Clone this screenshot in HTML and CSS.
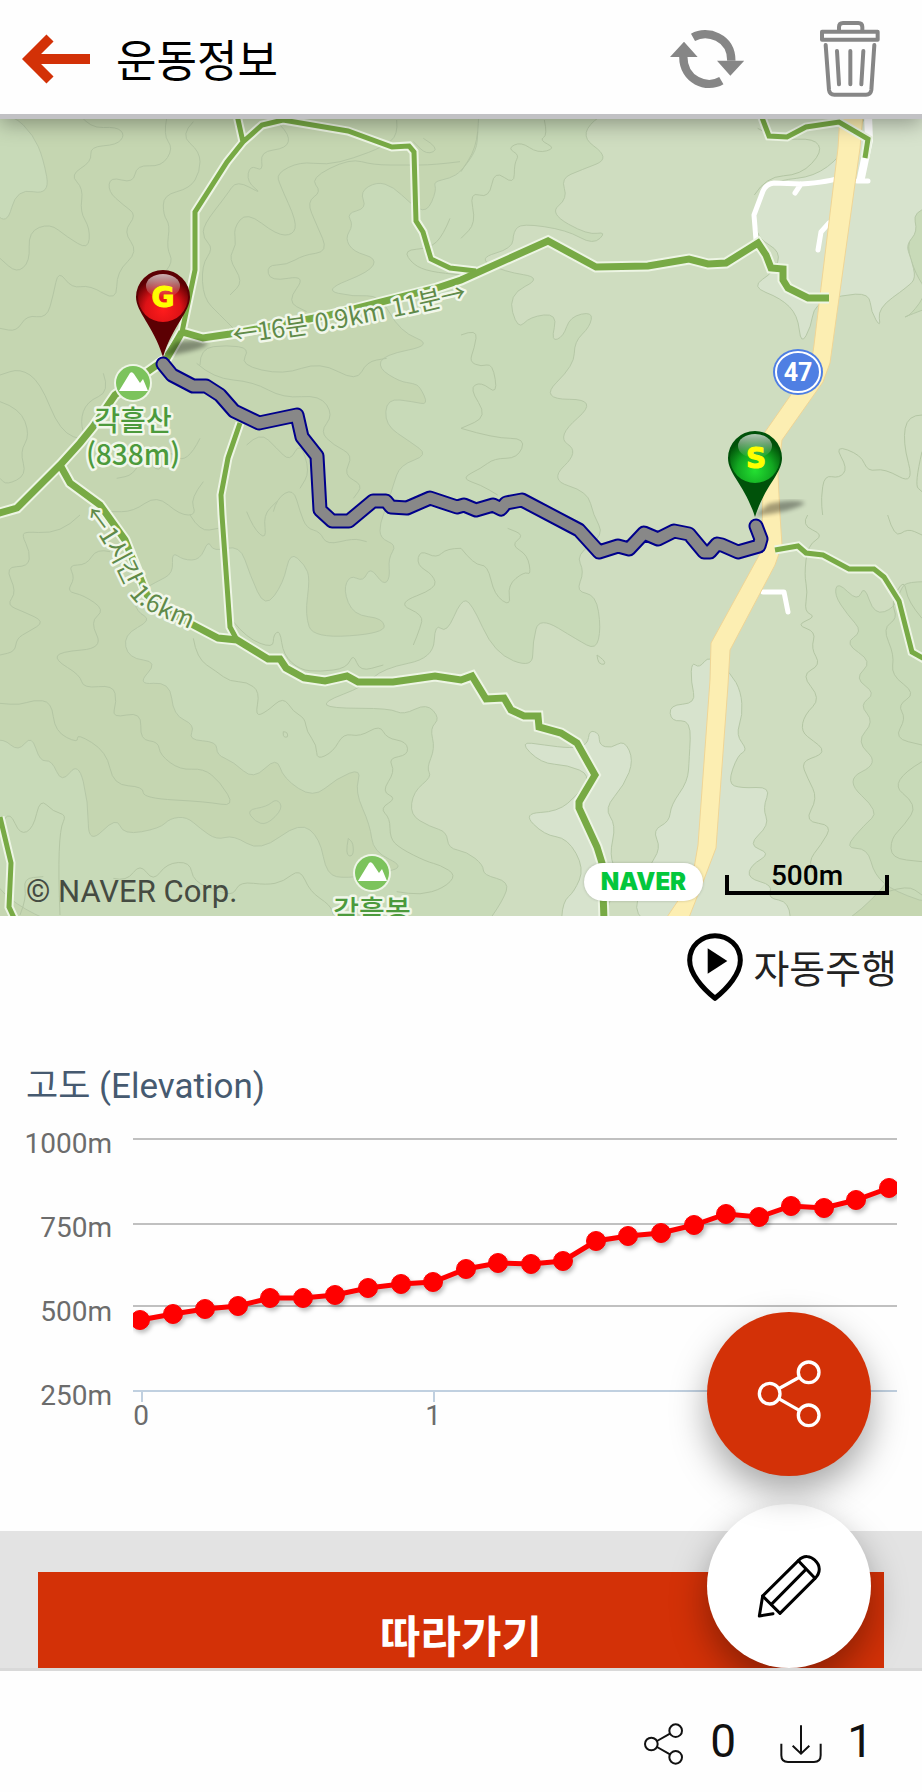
FILE: index.html
```html
<!DOCTYPE html>
<html lang="ko">
<head>
  <meta charset="UTF-8" />
  <meta name="viewport" content="width=device-width, initial-scale=1" />
  <title>운동정보</title>
  <link rel="stylesheet" href="styles.css">
</head>
<body>

  <header class="header">
    <button class="icon-btn" aria-label="뒤로">
      <svg width="70" height="50" viewBox="0 0 70 50"><path d="M68 25H8M28 4L7 25L28 46" fill="none" stroke="#d33107" stroke-width="10"/></svg>
    </button>
    <h1 class="title">운동정보</h1>
    <button class="icon-btn" aria-label="새로고침">
      <svg width="74" height="60" viewBox="0 0 222 180">
        <g fill="none" stroke="#868686" stroke-width="25">
          <path d="M69 25C112 1 184 24 184 95"/>
          <path d="M154 155C110 181 40 153 40 84"/>
        </g>
        <path d="M141 95h82l-42 45zM0 84h83L42 38z" fill="#868686"/>
      </svg>
    </button>
    <button class="icon-btn" aria-label="삭제">
      <svg width="60" height="76" viewBox="0 0 180 228" fill="none" stroke="#868686" stroke-width="12" stroke-linecap="round" stroke-linejoin="round">
        <path d="M57 28V18Q57 6 69 6H115Q127 6 127 18V28"/>
        <path d="M6 32H173V56H6z"/>
        <path d="M17 72L27 207Q29 221 43 221H138Q152 221 154 207L163 72"/>
        <path d="M51 90L57 190M91 90V190M130 90L124 190"/>
      </svg>
    </button>
  </header>

  <main class="content">
    <section class="map">
      <svg class="map-svg" viewBox="0 119 922 797">
        <defs>
          <radialGradient id="pinRed" cx="50%" cy="75%" r="65%">
            <stop offset="0" stop-color="#ff1c1c"/>
            <stop offset="0.55" stop-color="#dd1216"/>
            <stop offset="1" stop-color="#5c0003"/>
          </radialGradient>
          <radialGradient id="pinGreen" cx="50%" cy="75%" r="65%">
            <stop offset="0" stop-color="#24e032"/>
            <stop offset="0.55" stop-color="#12a821"/>
            <stop offset="1" stop-color="#004f08"/>
          </radialGradient>
          <linearGradient id="gloss" x1="0" y1="0" x2="0" y2="1">
            <stop offset="0" stop-color="#fff" stop-opacity="0.7"/>
            <stop offset="1" stop-color="#fff" stop-opacity="0"/>
          </linearGradient>
          <filter id="soft"><feGaussianBlur stdDeviation="2"/></filter>
          <path id="pathRidge" d="M234 344L330 330L410 314L470 300"/>
          <path id="pathValley" d="M83 514C104 540 115 563 129 593C138 610 158 614 198 633"/>
        </defs>

        <rect y="119" width="922" height="797" fill="#c5d6b1"/>
        <g id="terrain"></g>
        <g id="contours" class="contour"></g>

        <!-- roads -->
        <g class="lane">
          <path d="M842 177Q830 182 801 184L774 183Q766 184 763 191L754 215L756 240M801 184L795 193"/>
          <path d="M857 181H868M829 223L821 232L818 250M763 592H784L788 612"/>
          <path d="M868 115L869 140L861 178" stroke-width="8"/>
        </g>
        <path class="road-edge" d="M840 115H863L860 148L830 363L823 382L782 440L778 475L780 515L782 545L775 565L730 650L728 685L716 848L703 882L688 920H665L692 880L698 845L710 680L711 643L762 550L763 480L765 432L811 366L814 345L838 148z"/>

        <!-- hiking trails -->
        <g class="trail-case">
          <path d="M237 115L243 142M167 355L182 332L195 270V212L227 162L243 142L262 125L283 120L348 131L392 147L409 146L414 152L416 221L423 232L431 259L450 268L476 271"/>
          <path d="M240 423L228 458L221 495L222 515L230 627L237 640"/>
          <path d="M0 817L11 863L9 907L15 920M761 115L769 136L787 137L806 127L839 122L868 139L865 158"/>
          <path d="M775 550L798 546L806 553L823 555L849 569H874L884 577L899 601L912 652L926 660"/>
        </g>
        <g class="trail-case wide">
          <path d="M182 332L203 338L230 334L330 315L437 288L461 280L548 241L596 267L648 266L689 259L708 264L726 263L758 243L766 255L771 268L783 269V280L788 288L808 298L829 298"/>
          <path d="M182 332L167 358L150 370L115 395L93 427L80 443L60 465L17 508L-4 514"/>
          <path d="M60 465L70 483L100 505L125 540L147 595L165 610L197 627L218 638L237 640L268 659H280L286 668L304 678L325 681L347 676L358 682H393L435 676L461 680L472 676L486 699L504 698L511 710L524 716H538L539 727L561 733L577 743L595 775L579 802V808L597 847L602 863L604 920"/>
        </g>
        <g class="trail">
          <path d="M237 115L243 142M167 355L182 332L195 270V212L227 162L243 142L262 125L283 120L348 131L392 147L409 146L414 152L416 221L423 232L431 259L450 268L476 271"/>
          <path d="M240 423L228 458L221 495L222 515L230 627L237 640"/>
          <path d="M0 817L11 863L9 907L15 920M761 115L769 136L787 137L806 127L839 122L868 139L865 158"/>
          <path d="M775 550L798 546L806 553L823 555L849 569H874L884 577L899 601L912 652L926 660"/>
        </g>
        <g class="trail wide">
          <path d="M182 332L203 338L230 334L330 315L437 288L461 280L548 241L596 267L648 266L689 259L708 264L726 263L758 243L766 255L771 268L783 269V280L788 288L808 298L829 298"/>
          <path d="M182 332L167 358L150 370L115 395L93 427L80 443L60 465L17 508L-4 514"/>
          <path d="M60 465L70 483L100 505L125 540L147 595L165 610L197 627L218 638L237 640L268 659H280L286 668L304 678L325 681L347 676L358 682H393L435 676L461 680L472 676L486 699L504 698L511 710L524 716H538L539 727L561 733L577 743L595 775L579 802V808L597 847L602 863L604 920"/>
        </g>

        <!-- trail and peak names -->
        <text class="trail-label"><textPath href="#pathRidge">←16분 0.9km 11분→</textPath></text>
        <text class="trail-label"><textPath href="#pathValley">←1시간 1.6km</textPath></text>

        <g id="peak">
          <circle cx="133" cy="383" r="19" fill="#eef5e6"/>
          <circle cx="133" cy="383" r="17" fill="#7cc35c"/>
          <path d="M119 391L130 373Q132 371 134 374L140 383L143 379L148 391z" fill="#fff"/>
        </g>
        <use href="#peak" x="239" y="490"/>
        <text class="peak-label" x="133" y="431">각흘산</text>
        <text class="peak-label" x="133" y="465">(838m)</text>
        <text class="peak-label" x="372" y="921">각흘봉</text>

        <!-- recorded route -->
        <path class="route-edge" d="M163 364L172 375L193 386H206L220 395L234 411L259 423L297 415L302 437L317 456L320 510L332 521H349L373 501H386L391 507L407 508L430 498L457 507L464 505L476 510L493 505L501 509L506 503L522 500L579 530L599 552L618 546L629 549L644 533L658 539L674 531L689 534L704 552H710L717 544L722 545L738 552L759 546L761 539L756 526"/>
        <path class="route" d="M163 364L172 375L193 386H206L220 395L234 411L259 423L297 415L302 437L317 456L320 510L332 521H349L373 501H386L391 507L407 508L430 498L457 507L464 505L476 510L493 505L501 509L506 503L522 500L579 530L599 552L618 546L629 549L644 533L658 539L674 531L689 534L704 552H710L717 544L722 545L738 552L759 546L761 539L756 526"/>

        <!-- route 47 shield -->
        <ellipse cx="798" cy="372" rx="25" ry="23" fill="#4f7fe3"/>
        <ellipse cx="798" cy="372" rx="22" ry="20" fill="none" stroke="#fff" stroke-width="2"/>
        <text class="shield" x="798" y="381">47</text>

        <!-- goal and start pins -->
        <path d="M163 356L176 342Q200 338 208 344Q200 351 163 356z" fill="#000" opacity="0.35" filter="url(#soft)"/>
        <path d="M136 297a27 27 0 0 1 54 0C190 312 173 325 163 357C153 325 136 312 136 297z" fill="#5c0003"/>
        <circle cx="163" cy="297" r="25" fill="url(#pinRed)"/>
        <ellipse cx="163" cy="286" rx="17" ry="12" fill="url(#gloss)"/>
        <text class="pin-text" x="163" y="307">G</text>

        <path d="M755 516L768 504Q795 498 805 503Q795 511 755 516z" fill="#000" opacity="0.35" filter="url(#soft)"/>
        <path d="M728 458a27 27 0 0 1 54 0C782 474 765 485 755 517C745 485 728 474 728 458z" fill="#00520a"/>
        <circle cx="755" cy="458" r="25" fill="url(#pinGreen)"/>
        <ellipse cx="755" cy="446" rx="17" ry="12" fill="url(#gloss)"/>
        <text class="pin-text" x="756" y="468">S</text>
      </svg>

      <div class="map-bar">
        <span class="copyright">© NAVER Corp.</span>
        <a class="naver" href="#">NAVER</a>
        <span class="scale">500m</span>
      </div>
    </section>

    <div class="drive-row">
      <button class="drive-btn">
        <svg width="56" height="68" viewBox="0 0 168 204">
          <path d="M84 8C124 8 160 38 160 82C160 122 122 166 84 196C46 166 8 122 8 82C8 38 44 8 84 8z" fill="none" stroke="#000" stroke-width="15" stroke-linejoin="round"/>
          <path d="M62 46L121 84L62 122z"/>
        </svg>
        <span>자동주행</span>
      </button>
    </div>

    <section class="elevation">
      <h2>고도 (Elevation)</h2>
      <svg class="chart" viewBox="0 0 922 424">
        <defs>
          <clipPath id="plot"><rect x="133" y="0" width="764" height="300"/></clipPath>
        </defs>
        <path class="grid" d="M133 32H897M133 117H897M133 199H897"/>
        <path class="axis" d="M133 284H897M142 284V295M434 284V295M726 284V295"/>
        <g class="y-labels">
          <text x="112" y="46">1000m</text>
          <text x="112" y="130">750m</text>
          <text x="112" y="214">500m</text>
          <text x="112" y="298">250m</text>
        </g>
        <g class="x-labels">
          <text x="141" y="318">0</text>
          <text x="433" y="318">1</text>
        </g>
        <g clip-path="url(#plot)"><g id="series" class="series"></g></g>
      </svg>
    </section>

    <div class="action">
      <button class="follow-btn">따라가기</button>
    </div>
  </main>

  <div class="fabs">
    <button class="fab fab-share" aria-label="공유">
      <svg width="70" height="70" viewBox="879 387 210 210" fill="none" stroke="#fff" stroke-width="10">
        <circle cx="926" cy="491" r="31"/>
        <circle cx="1043" cy="427" r="31"/>
        <circle cx="1043" cy="556" r="31"/>
        <path d="M953 476L1015 442M953 506L1015 541"/>
      </svg>
    </button>
    <button class="fab fab-edit" aria-label="수정">
      <svg width="70" height="70" viewBox="879 153 210 210" fill="none" stroke="#000" stroke-width="9" stroke-linejoin="round" stroke-linecap="round">
        <path d="M905 288L1012 182C1028 164 1050 168 1062 181C1078 195 1080 218 1062 235L957 340z"/>
        <path d="M1012 182L1062 235M1034 209L931 313"/>
        <path d="M905 288L895 348L936 341"/>
      </svg>
    </button>
  </div>

  <footer class="footer">
    <button class="stat" aria-label="공유 0">
      <svg width="42" height="42" viewBox="549 670 126 126" fill="none" stroke="#111" stroke-width="6">
        <circle cx="574" cy="733" r="19"/>
        <circle cx="647" cy="693" r="19"/>
        <circle cx="647" cy="773" r="19"/>
        <path d="M591 724L630 702M591 742L630 764"/>
      </svg>
      <span>0</span>
    </button>
    <button class="stat" aria-label="다운로드 1">
      <svg width="42" height="42" viewBox="958 670 126 126" fill="none" stroke="#111" stroke-width="6">
        <path d="M1021 677V760M996 738L1021 762L1046 738M962 732V767Q962 787 982 787H1060Q1080 787 1080 767V732"/>
      </svg>
      <span>1</span>
    </button>
  </footer>

  <script src="map.js"></script>
</body>
</html>
```
FILE: styles.css
```css
* {
  box-sizing: border-box;
  margin: 0;
  padding: 0;
}

body {
  font-family: Roboto, 'Noto Sans CJK KR', sans-serif;
  background-color: #fefefe;
  color: #000;
  display: flex;
  flex-direction: column;
  height: 100vh;
  position: relative;
}

button {
  font-family: inherit;
  background: none;
  border: none;
  cursor: pointer;
}

svg {
  display: block;
  flex: none;
}

.header {
  display: flex;
  align-items: center;
  height: 119px;
  padding: 3px 42px 0 22px;
  background-color: #fefefe;
  border-bottom: 5px solid #c1c1c4;
  box-shadow: 0 4px 20px rgba(0, 0, 0, 0.35);
  position: relative;
  z-index: 1;
}

.title {
  flex: 1;
  padding: 6px 0 0 24px;
  font-size: 44px;
  font-weight: 400;
  line-height: 60px;
}

.icon-btn + .icon-btn {
  margin-left: 76px;
}

.content {
  flex: 1;
  min-height: 0;
  overflow-y: auto;
  scrollbar-width: none;
}

/* map */
.map {
  position: relative;
}

.map-svg {
  width: 100%;
}

.contour {
  fill: none;
  stroke: #b4c6a4;
  stroke-width: 1;
}

.lane {
  fill: none;
  stroke: #fff;
  stroke-width: 5;
  stroke-linecap: round;
  stroke-linejoin: round;
}

.road-edge {
  fill: #fceeb2;
  stroke: #efd596;
  stroke-width: 1;
}

.trail,
.trail-case {
  fill: none;
  stroke: #78aa45;
  stroke-width: 5;
}

.trail-case {
  stroke: #edf5e4;
  stroke-width: 9;
}

.trail.wide {
  stroke-width: 7;
}

.trail-case.wide {
  stroke-width: 11;
}

.trail-label,
.peak-label {
  font-family: 'Noto Sans CJK KR', sans-serif;
  font-size: 25px;
  fill: #5f8a49;
  stroke: #f1f7ea;
  stroke-width: 5px;
  stroke-linejoin: round;
  paint-order: stroke;
}

.peak-label {
  font-size: 28px;
  font-weight: 500;
  fill: #4c9a3c;
  text-anchor: middle;
}

.route,
.route-edge {
  fill: none;
  stroke: #888;
  stroke-width: 11;
  stroke-linecap: round;
  stroke-linejoin: round;
}

.route-edge {
  stroke: #00008b;
  stroke-width: 15;
}

.shield {
  font-size: 25px;
  font-weight: 700;
  fill: #fff;
  text-anchor: middle;
}

.pin-text {
  font-family: 'DejaVu Sans', sans-serif;
  font-size: 28px;
  font-weight: 700;
  fill: #ff0;
  stroke: #ff0;
  stroke-width: 1px;
  text-anchor: middle;
}

.map-bar {
  position: absolute;
  left: 26px;
  right: 33px;
  bottom: 15px;
  display: flex;
  align-items: flex-end;
}

.copyright {
  flex: 1;
  font-size: 31px;
  line-height: 18px;
  color: #454b42;
}

.naver {
  width: 119px;
  margin-right: 22px;
  border-radius: 20px;
  background-color: #fff;
  color: #03c73c;
  box-shadow: 0 0 3px rgba(0, 0, 0, 0.2);
  font-family: Inter, sans-serif;
  font-size: 24px;
  font-weight: 900;
  line-height: 38px;
  text-align: center;
  text-decoration: none;
}

.scale {
  width: 164px;
  height: 34px;
  margin-bottom: 6px;
  font-size: 28px;
  font-weight: 500;
  line-height: 30px;
  text-align: center;
  background:
    linear-gradient(#000, #000) left bottom / 4px 20px no-repeat,
    linear-gradient(#000, #000) right bottom / 4px 20px no-repeat,
    linear-gradient(#000, #000) left bottom / 100% 4px no-repeat;
}

/* auto drive */
.drive-row {
  display: flex;
  justify-content: flex-end;
  padding: 17px 25px 0;
}

.drive-btn {
  display: flex;
  align-items: center;
  gap: 10px;
  color: #222;
  font-size: 39px;
  line-height: 60px;
}

.drive-btn span {
  padding-top: 5px;
}

/* elevation chart */
.elevation h2 {
  padding: 66px 26px 0;
  color: #465a70;
  font-size: 35px;
  font-weight: 400;
  line-height: 40px;
}

.chart {
  width: 100%;
}

.grid {
  fill: none;
  stroke: #c0c0c0;
  stroke-width: 2;
}

.axis {
  fill: none;
  stroke: #c0d0e0;
  stroke-width: 2;
}

.y-labels,
.x-labels {
  fill: #6c6c6c;
  font-size: 28px;
  text-anchor: end;
}

.x-labels {
  text-anchor: middle;
}

.series {
  fill: #f00;
  stroke: #f00;
  filter: drop-shadow(2px 3px 2px rgba(0, 0, 0, 0.25));
}

.series polyline {
  fill: none;
  stroke-width: 5;
}

/* bottom action */
.action {
  background-color: #e3e3e3;
  padding: 41px 38px;
}

.follow-btn {
  width: 100%;
  padding-top: 4px;
  background-color: #d33107;
  color: #fff;
  font-size: 44px;
  font-weight: 700;
  line-height: 124px;
}

.fabs {
  position: absolute;
  right: 51px;
  bottom: 124px;
  z-index: 2;
  display: flex;
  flex-direction: column;
  gap: 28px;
}

.fab {
  display: flex;
  align-items: center;
  justify-content: center;
  width: 164px;
  height: 164px;
  border-radius: 50%;
  box-shadow: 0 16px 36px rgba(0, 0, 0, 0.35);
}

.fab-share {
  background-color: #d33107;
  position: relative;
  z-index: 1;
}

.fab-edit {
  background-color: #fff;
}

.footer {
  display: flex;
  align-items: center;
  justify-content: flex-end;
  gap: 44px;
  height: 124px;
  padding: 24px 49px 0 0;
  background-color: #fefefe;
  border-top: 3px solid #d9d9d9;
  position: relative;
  z-index: 3;
}

.stat {
  display: flex;
  align-items: center;
  gap: 25px;
  color: #111;
  font-size: 46px;
  line-height: 50px;
}

.stat span {
  padding-bottom: 6px;
}
```
FILE: map.js
```js
const NS = "http://www.w3.org/2000/svg";

// terrain coordinates are stored at three units per map pixel
function toPoints(texto, ox = 0, oy = 0) {
  return texto.trim().split(/\s+/).map(p => {
    const [x, y] = p.split(",").map(Number);
    return [(x + ox) / 3, (y + oy) / 3];
  });
}

// rounds the corners by running quadratic curves through the midpoints
function smooth(pts, closed) {
  const mid = (a, b) => [((a[0] + b[0]) / 2).toFixed(1), ((a[1] + b[1]) / 2).toFixed(1)];
  const all = closed ? [...pts, pts[0], pts[1]] : pts;
  let d = closed ? `M${mid(all[0], all[1])}` : `M${all[0]}`;
  for (let i = 1; i < all.length - 1; i++) {
    d += `Q${all[i].map(v => v.toFixed(1))} ${mid(all[i], all[i + 1])}`;
  }
  return closed ? d + "z" : d + `L${all[all.length - 1]}`;
}

function add(parent, name, attrs) {
  const el = document.createElementNS(NS, name);
  for (const key in attrs) el.setAttribute(key, attrs[key]);
  parent.appendChild(el);
}

const areas = [
  // lower slopes
  ["#c8dab8", 0, 0, "1440,300 1433,395 1430,450 1383,515 1350,535 1300,545 1310,570 1280,640 1230,610 1180,560 1130,545 1080,575 1100,625 1040,640 1060,675 1035,715 1060,755 1130,775 1110,815 970,870 1060,890 1140,885 1200,995 1300,1035 1150,1065 1135,1105 1200,1145 1240,1150 1260,1160 1285,1215 1240,1205 1160,1195 1155,1275 1230,1325 1285,1365 1200,1395 1180,1455 1160,1520 1140,1570 1140,1615 1190,1635 1165,1675 1170,1735 1150,1755 1110,1700 1090,1745 1050,1725 1030,1770 1060,1845 1150,1855 1155,1900 940,1915 915,1845 930,1735 915,1695 870,1655 850,1750 795,1825 750,1725 720,1635 640,1655 625,1620 600,1680 550,1680 515,1655 520,1720 470,1745 400,1785 410,1835 455,1860 370,1905 385,1975 475,1985 410,2055 510,2045 520,2145 585,2175 565,2220 650,2225 650,2265 700,2285 760,2340 830,2270 850,2335 940,2395 1010,2335 1085,2305 1065,2375 1110,2475 1120,2555 1215,2600 1140,2620 1040,2635 980,2625 960,2515 900,2465 780,2555 700,2505 650,2520 600,2485 560,2450 510,2455 480,2485 370,2505 350,2450 265,2535 265,2405 235,2285 185,2350 155,2280 120,2285 95,2205 55,2255 10,2215 -40,2230 -40,2900 2900,2900 2900,300"],
  ["#c8dab8", 0, 345, "-40,0 40,0 100,60 130,130 150,240 50,220 20,335 -40,260"],
  // valley floor
  ["#cfddc0", 0, 0, "1870,300 1728,400 1833,475 1743,510 1683,535 1703,595 1648,640 1763,705 1820,695 1780,735 1700,690 1565,670 1540,695 1538,745 1433,775 1513,815 1628,833 1523,885 1553,990 1590,950 1673,940 1653,1025 1690,1010 1710,950 1778,935 1770,980 1723,1025 1723,1095 1618,1198 1798,1198 1668,1310 1738,1355 1648,1440 1763,1475 1780,1545 1813,1605 1728,1665 1753,1715 1728,1775 1788,1785 1803,1885 1788,1950 1733,1920 1618,1850 1598,1925 1598,2005 1483,1960 1413,1805 1383,1800 1340,1900 1305,1870 1300,1975 1150,2005 1090,2060 970,2105 990,2125 1170,2125 1210,2145 1280,2110 1320,2155 1290,2185 1305,2245 1280,2305 1295,2330 1240,2375 1230,2445 1290,2480 1340,2495 1345,2545 1400,2555 1450,2595 1450,2625 1528,2645 1510,2700 1440,2800 2900,2900 2900,300"],
  // eastern hillside
  ["#c8dab8", 1383, 1545, "1130,200 1120,240 1160,300 1205,350 1150,385 1235,440 1180,490 1245,535 1195,570 1240,620 1185,680 1255,745 1150,795 1255,890 1210,930 1150,1000 1220,1000 1240,1080 1300,1130 1450,1180 1450,200 1340,200 1320,220 1300,280 1240,300 1210,210 1190,260"],
  ["#c8dab8", 1383, 345, "1450,280 1370,265 1350,290 1370,340 1335,390 1365,480 1400,530 1350,600 1320,610 1450,560"],
  // fields
  ["#d7e3cd", 1383, 345, "1230,-40 1110,180 905,200 880,300 890,370 960,410 940,470 870,515 960,550 1010,600 1020,690 1050,635 1060,570 1140,540 1225,535 1230,590 1260,640 1250,580 1340,515 1365,490 1350,430 1335,390 1370,350 1355,290 1450,265 1450,-40"],
  ["#d7e3cd", 1383, 1545, "745,420 715,460 692,440 690,500 705,565 625,570 630,620 690,615 685,730 680,800 630,870 625,920 575,945 600,1000 560,1060 500,1250 990,1250 985,1160 920,1150 935,1110 860,1090 870,1050 930,1015 860,990 925,930 905,880 930,815 840,820 800,805 830,720 860,705 825,660 845,600 840,530 810,475"],
  ["#d7e3cd", 1383, 1545, "175,680 250,690 330,700 380,690 385,645 415,655 415,690 450,700 490,675 518,735 490,810 430,880 465,930 445,1020 470,1080 420,1250 300,1250 305,1160 340,1130 370,1060 320,970 250,960 185,895 290,890 350,840 390,780 320,750 240,745"],
  // knolls
  ["#c5d6b1", 0, 1545, "740,885 800,875 830,850 850,880 800,930 765,920"]
];

const lines = [
  [0, 345, "240,0 270,40 350,35 375,60 350,90 270,95 275,140 210,180 250,220 240,290 270,340 265,405 200,365 150,325 85,350 90,440 50,475 0,430"],
  [0, 345, "500,10 490,60 520,100 485,155 410,150 400,205 330,185 325,230 370,270 410,300 370,350 415,410 350,470 350,560 270,510 215,520 175,465 160,540 140,610 80,600 50,650 0,640"],
  [0, 345, "580,20 540,60 600,110 600,170 570,220 490,240 490,300 510,330 500,400 520,440 480,490"],
  [0, 345, "840,30 870,60 860,100 780,110 790,170 750,150 740,200 790,240 710,195 680,240 610,330 610,370 640,400 605,450 610,550 660,600 700,640"],
  [0, 345, "1190,15 1195,60 1150,95 1060,130 980,150 900,140 830,175 840,210 890,320 880,360 830,360 740,290 700,340 710,390 685,430 730,500 690,540"],
  [0, 345, "1380,140 1300,150 1220,150 1120,150 1050,130 930,190 965,230 920,260 950,330 985,410 910,420 860,450 800,450 810,500 920,480 860,560 920,590"],
  [0, 345, "1270,70 1320,100 1280,120 1240,80"],
  [0, 345, "1350,310 1330,360 1290,400 1210,405 1240,450 1290,470 1383,480"],
  [0, 345, "600,750 600,700 680,690 750,700 720,750 850,780 960,740 1070,800 1100,740 1160,730"],
  [0, 345, "590,745 640,790 760,800 850,850 960,840 1000,900 960,950 1000,990 1060,1020 1030,1080 1090,1110 1060,1150"],
  [0, 345, "310,775 330,830 260,860 240,920 260,980 180,950 120,800 60,760 0,780"],
  [0, 345, "0,860 60,880 90,960 60,1010 80,1080 20,1110 0,1090"],
  [0, 345, "600,970 560,1050 500,1000 480,1080 430,1020 400,1080 350,1090"],
  [0, 345, "610,1100 570,1150 590,1200 540,1200 470,1140 400,1190 330,1190"],
  [0, 345, "740,990 780,950 830,1000 870,1040 900,980 930,1070 900,1120"],
  [0, 345, "820,1190 830,1150 880,1120 900,1190 920,1240 960,1250 980,1290 1060,1270 1100,1280"],
  [0, 345, "740,1190 760,1240 800,1275 790,1200 830,1160"],
  [0, 1545, "330,110 290,100 260,150 205,150 225,190 200,230 250,240 315,285 270,320 310,400 180,410 165,435 240,480 250,520 340,510 350,560 335,610 425,590 420,675 475,680 480,720 540,765 610,760 660,800 705,875 620,860 430,850 430,815 340,810 320,710 230,655 235,685 165,650 155,560 100,555 60,570 0,565"],
  [0, 1545, "240,0 210,30 150,55 80,50 65,60 90,110 85,155 15,155 50,230 20,270 70,290 135,320 85,350 50,370 45,410 0,420"],
  [0, 1545, "570,0 600,50 655,40"],
  [0, 1545, "580,370 590,430 650,470 690,500 740,500 780,530 765,605 800,590 850,545 880,590 915,610 920,650 950,690 950,735 1000,710 1030,655 1080,665 1140,630 1160,670 1220,680 1225,720 1165,730 1185,770 1145,830 1190,850 1140,880 1170,910 1170,970 1200,1000 1280,1040 1320,1050 1370,1080 1330,1120 1260,1140 1190,1130"],
  [0, 1545, "700,320 740,370 820,400 820,360 840,345 850,420 900,465 960,470 1040,460 1060,415 1080,470 1150,450"],
  [0, 1545, "1383,100 1340,100 1310,130 1260,105 1250,150 1300,180 1310,220 1190,265 1270,300 1260,340 1240,390"],
  [0, 1545, "180,1200 175,1080 180,940 200,900 160,890 120,850 100,940 60,960 30,890 0,930"],
  [0, 1545, "340,1090 380,1100 420,1045 460,1100 500,1045 570,1040 580,1100 660,1130 700,1140 720,1100 800,1110 850,1100 900,1060 930,1130 990,1170 1000,1200"],
  [0, 1545, "60,1200 80,1150 70,1090 130,1085"],
  [0, 1545, "1045,970 1035,1020 1060,1025 1060,985 1045,970"],
  [0, 1545, "850,650 848,665 864,668 862,652 850,650"],
  [1383, 345, "250,15 260,60 235,75 285,100 230,115 180,80 140,100 175,120 160,145 160,210 100,165 85,250 25,230 45,325 0,370"],
  [1383, 345, "50,50 45,100 0,170"],
  [1383, 345, "0,660 50,640 40,700 25,740 60,755 95,745 110,840 60,800 25,820 80,905 0,940"],
  [1383, 345, "0,940 100,970 195,970 170,1030 100,1030 60,1060 0,1090 60,1110 110,1140"],
  [1383, 345, "880,240 915,185 1020,180 1085,110 1060,70 960,75 890,40"],
  [1383, 345, "1383,900 1340,900 1325,980 1360,1110 1270,1060 1220,1070 1200,1020 1120,990 1160,1060 1135,1090 1090,1080 1080,1150 1085,1200"],
  [1383, 345, "1383,1010 1360,1110 1383,1130"],
  [1383, 1545, "1040,0 1020,30 1090,60 1040,90 1030,180 1040,230 1030,290 1065,305 1005,330 1065,350 1050,400 1080,450 1020,480 1080,550 1030,600 1020,650 1060,680 1085,700 1080,720 1020,740 1040,790 1070,850 1030,920 1115,930 1080,990 1040,1040 1070,1100"],
  [1383, 1545, "1383,310 1340,260 1330,190 1290,260 1310,310 1265,340 1300,420 1290,480 1365,535 1310,570 1335,610 1300,670 1383,690"],
  [1383, 1545, "1383,740 1280,800 1370,870 1330,930 1290,970 1290,1030 1383,1040"],
  [1383, 1545, "1280,0 1300,70 1340,40 1383,60"],
  [1383, 1545, "0,100 40,150 80,150 100,240 150,275 140,210 190,170 210,180 200,120 150,90 190,60 140,40"],
  [1383, 1545, "408,420 430,435 432,450 412,445 408,420"],
  [1383, 1545, "1280,1130 1340,1110 1383,1140"]
];

const terrain = document.getElementById("terrain");
areas.forEach(([fill, ox, oy, pts]) => {
  add(terrain, "path", { d: smooth(toPoints(pts, ox, oy), true), fill, stroke: "#b6c8a7", "stroke-width": 1 });
});

const contours = document.getElementById("contours");
lines.forEach(([ox, oy, pts]) => {
  add(contours, "path", { d: smooth(toPoints(pts, ox, oy), false) });
});

// elevation in metres, one sample every 1/9 km
const elevation = [461, 479, 494, 503, 527, 527, 536, 557, 568, 574, 613, 631,
  629, 637, 695, 710, 720, 744, 777, 769, 802, 795, 817, 854];
const series = document.getElementById("series");
const dots = elevation.map((m, i) => [
  Math.round(140 + i * 749 / 23),
  Math.round(284 - (m - 250) * 252 / 750)
]);
add(series, "polyline", { points: dots.join(" ") });
dots.forEach(([cx, cy]) => add(series, "circle", { cx, cy, r: 9.5 }));
```
